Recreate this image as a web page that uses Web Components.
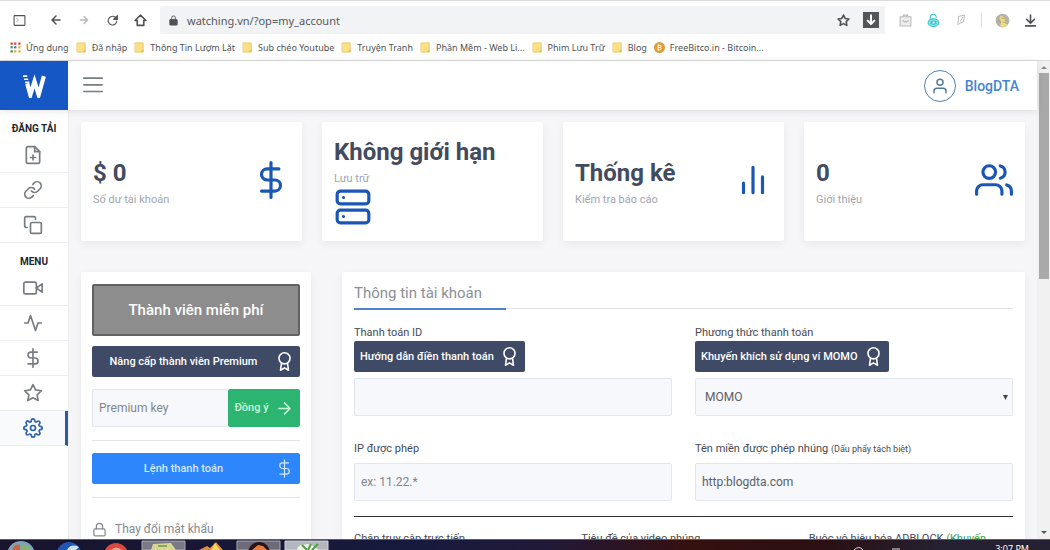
<!DOCTYPE html>
<html lang="vi">
<head>
<meta charset="utf-8">
<title>watching.vn</title>
<style>
html,body{margin:0;height:100%}
body{font-family:Roboto,"Liberation Sans",sans-serif;color:#3d4657;background:#fff}
</style>
</head>
<body>
<desktop-view></desktop-view>
<script>
const define = (name, html, setup) => {
  const tpl = document.createElement('template');
  tpl.innerHTML = '<style>*{box-sizing:border-box}:host{display:block}[hidden]{display:none}</style>' + html;
  customElements.define(name, class extends HTMLElement {
    connectedCallback() {
      if (this.shadowRoot) return;
      this.attachShadow({mode: 'open'}).append(tpl.content.cloneNode(true));
      if (setup) setup(this, this.shadowRoot);
    }
  });
};

const ICONS = {
  file: '<path d="M14 2H6a2 2 0 0 0-2 2v16a2 2 0 0 0 2 2h12a2 2 0 0 0 2-2V8z"/><path d="M14 2v6h6M12 18v-6M9 15h6"/>',
  link: '<path d="M10 13a5 5 0 0 0 7.54.54l3-3a5 5 0 0 0-7.07-7.07l-1.72 1.71"/><path d="M14 11a5 5 0 0 0-7.54-.54l-3 3a5 5 0 0 0 7.07 7.07l1.71-1.71"/>',
  copy: '<rect x="9" y="9" width="13" height="13" rx="2"/><path d="M5 15H4a2 2 0 0 1-2-2V4a2 2 0 0 1 2-2h9a2 2 0 0 1 2 2v1"/>',
  video: '<path d="M23 7l-7 5 7 5V7z"/><rect x="1" y="5" width="15" height="14" rx="2"/>',
  activity: '<path d="M22 12h-4l-3 9L9 3l-3 9H2"/>',
  dollar: '<path d="M12 1v22M17 5H9.500a3.500 3.500 0 0 0 0 7h5a3.500 3.500 0 0 1 0 7H6"/>',
  star: '<path d="M12 2l3.090 6.260L22 9.270l-5 4.870 1.180 6.880L12 17.770l-6.180 3.250L7 14.140 2 9.270l6.910-1.010z"/>',
  gear: '<circle cx="12" cy="12" r="3"/><path d="M19.4 15a1.650 1.650 0 0 0 .33 1.820l.06.06a2 2 0 1 1-2.830 2.830l-.06-.06a1.650 1.650 0 0 0-2.800 1.170V21a2 2 0 0 1-4 0v-.09A1.650 1.650 0 0 0 9 19.400a1.650 1.650 0 0 0-1.820.33l-.06.06a2 2 0 1 1-2.830-2.830l.06-.06A1.650 1.650 0 0 0 3.090 14H3a2 2 0 0 1 0-4h.09A1.650 1.650 0 0 0 4.600 9a1.650 1.650 0 0 0-.33-1.820l-.06-.06a2 2 0 1 1 2.830-2.830l.06.06A1.650 1.650 0 0 0 10 3.090V3a2 2 0 0 1 4 0v.09a1.650 1.650 0 0 0 2.820 1.180l.06-.06a2 2 0 1 1 2.830 2.830l-.06.06A1.650 1.650 0 0 0 20.910 10H21a2 2 0 0 1 0 4h-.09a1.650 1.650 0 0 0-1.510 1z"/>',
  server: '<rect x="2" y="2" width="20" height="8" rx="2"/><rect x="2" y="14" width="20" height="8" rx="2"/><path d="M6 6h.01M6 18h.01"/>',
  bars: '<path d="M12 20V4M18 20V10M6 20v-6"/>',
  users: '<path d="M17 21v-2a4 4 0 0 0-4-4H5a4 4 0 0 0-4 4v2"/><circle cx="9" cy="7" r="4"/><path d="M23 21v-2a4 4 0 0 0-3-3.870M16 3.130a4 4 0 0 1 0 7.750"/>',
  user: '<path d="M20 21v-2a4 4 0 0 0-4-4H8a4 4 0 0 0-4 4v2"/><circle cx="12" cy="7" r="4"/>',
  award: '<circle cx="12" cy="8" r="7"/><path d="M8.210 13.890L7 23l5-3 5 3-1.210-9.120"/>',
  right: '<path d="M5 12h14M12 5l7 7-7 7"/>',
  left: '<path d="M20 12H4M12 4l-8 8 8 8"/>',
  lock: '<rect x="3" y="11" width="18" height="11" rx="2"/><path d="M7 11V7a5 5 0 0 1 10 0v4"/>',
  menu: '<path d="M1 5h22M1 13h22M1 21h22"/>',
  reload: '<path d="M20 13a8 8 0 1 1-3-7l3 3"/><path d="M21 3v7h-7z" fill="currentColor"/>',
  home: '<path d="M2 12L12 2l10 10h-4v9H6v-9z"/>',
  panel: '<rect x="2" y="3" width="20" height="18" rx="1"/><path d="M7 8l3 3-3 3" stroke-width="1"/>',
  padlock: '<rect x="4" y="10" width="16" height="12" rx="1" fill="currentColor"/><path d="M8 10V6a4 4 0 0 1 8 0v4"/>',
  download: '<path d="M12 2v14M5 10l7 7 7-7M3 22h18"/>',
  save: '<rect x="1" y="1" width="22" height="22" rx="1" fill="#55565a" stroke="#55565a"/><path d="M12 5v13M7 13l5 5 5-5" stroke="#fff"/>',
  bag: '<path d="M8 6V2h8v4"/><rect x="2" y="5" width="20" height="17" fill="#eee"/><path d="M7 12l3 3 2-2 2 2 3-3"/>',
  mint: '<g stroke="#35c3cd"><path d="M6 10V6a5 5 0 0 1 11 0" /><ellipse cx="12" cy="16" rx="10" ry="7" fill="#8ee2e5"/><path d="M7 14h10M6 18h11"/><circle cx="12" cy="16" r="3" fill="#fff"/></g>',
  feather: '<path d="M6 21l1-16 12-3-2 13-9 5M11 14l4-7"/>',
  avatar: '<circle cx="12" cy="12" r="11" fill="#b5b3a6" stroke="none"/><path d="M9 4l4 2 3 4-1 4 5 2-1 4-7 3-4-3 2-7-3-4z" fill="#eadb83" stroke="none"/><path d="M10 8l4 1M14 15l6 2M5 12l4 3" stroke="#a08a54" stroke-width="1"/>',
  folder: '<path d="M3 2h17v20H3z" fill="#fbe08a" stroke="#eac762"/><path d="M18 17h3v5h-6z" fill="#e9bd54" stroke="none"/>',
  coin: '<circle cx="12" cy="12" r="12" fill="#e39a35" stroke="none"/><path d="M9 6v12M9 7h4a2 2 0 0 1 0 5H9h5a3 3 0 0 1 0 5H9" stroke="#fff"/>',
  apps: '<g stroke="none"><path fill="#d8493b" d="M1 1h5v5H1zM9 1h5v5H9zM18 1h5v5h-5z"/><path fill="#4a9b58" d="M1 9h5v5H1z"/><path fill="#4481cf" d="M9 9h5v5H9z"/><path fill="#dfae38" d="M18 9h5v5h-5zM9 18h5v5H9z"/><path fill="#3e8f55" d="M1 18h5v5H1z"/><path fill="#dfae38" d="M18 18h5v5h-5z"/></g>',
  brand: '<g stroke="#fff" stroke-linecap="butt" stroke-linejoin="miter" stroke-width="4"><path d="M5 10l3 11 4-13 4 13L21 3"/><path d="M1 3h4M2 6h4M3 9h4" stroke-width="1.500"/></g>'
};

define('ui-icon', '<style>:host{display:inline-block;flex:none;line-height:0}</style><svg viewBox="0 0 24 24" fill="none" stroke="currentColor" stroke-linecap="round" stroke-linejoin="round" aria-hidden="true"></svg>', (el, root) => {
  const svg = root.querySelector('svg'), size = el.getAttribute('size') || 20;
  svg.setAttribute('width', size);
  svg.setAttribute('height', size);
  svg.setAttribute('stroke-width', el.getAttribute('weight') || 2);
  svg.innerHTML = ICONS[el.getAttribute('name')];
});

define('browser-toolbar', `<style>
:host{border-top:1px solid #dcdcdc;background:#fff;color:#505256}
nav{display:flex;align-items:center;height:38px;padding:4px 12px}
button{display:grid;place-items:center;border:0;background:none;padding:0;color:inherit;flex:none;width:28px;height:28px}
.first{width:14px;margin-right:16px}
.ext{margin-left:6px}
.last{margin-right:-6px}
.address{display:flex;align-items:center;flex:1;height:28px;background:#f1f3f4;border-radius:2px;margin-left:6px;padding-left:8px;min-width:0}
input{flex:1;min-width:0;border:0;background:none;outline:0;padding:0 0 0 8px;font:11px "Noto Sans",sans-serif;color:#55585c}
.faded{color:#b9babc}
hr{width:1px;height:14px;border:0;background:#ddd;margin:0 6px}
</style>
<nav aria-label="Trình duyệt">
<button class="first" aria-label="Bảng"><ui-icon name="panel" size="13"></ui-icon></button>
<button aria-label="Quay lại"><ui-icon name="left" size="12" weight="3"></ui-icon></button>
<button class="faded" aria-label="Tiến"><ui-icon name="right" size="12" weight="3"></ui-icon></button>
<button aria-label="Tải lại"><ui-icon name="reload" size="13" weight="2"></ui-icon></button>
<button aria-label="Trang chủ"><ui-icon name="home" size="13" weight="3"></ui-icon></button>
<div class="address"><ui-icon name="padlock" size="11"></ui-icon><input aria-label="Địa chỉ" value="watching.vn/?op=my_account">
<button aria-label="Dấu trang"><ui-icon name="star" size="13" weight="3"></ui-icon></button>
<button aria-label="Lưu"><ui-icon name="save" size="16" weight="3"></ui-icon></button></div>
<button class="faded ext" aria-label="Tiện ích"><ui-icon name="bag" size="13"></ui-icon></button>
<button aria-label="Bảo mật"><ui-icon name="mint" size="13"></ui-icon></button>
<button class="faded" aria-label="Ghi chú"><ui-icon name="feather" size="12"></ui-icon></button>
<hr>
<button aria-label="Hồ sơ"><ui-icon name="avatar" size="15"></ui-icon></button>
<button class="last" aria-label="Tải xuống"><ui-icon name="download" size="13" weight="3"></ui-icon></button>
</nav>`);

define('bookmark-link', `<style>:host{flex:none}a{display:flex;align-items:center;gap:5px;color:#505256;text-decoration:none;white-space:nowrap;font:9px/14px "Noto Sans",sans-serif}</style><a href="#"><ui-icon size="11"></ui-icon><slot></slot></a>`, (el, root) => {
  const old = root.querySelector('ui-icon'), icon = document.createElement('ui-icon');
  icon.setAttribute('name', el.getAttribute('icon') || 'folder');
  icon.setAttribute('size', 11);
  old.replaceWith(icon);
});

define('bookmark-bar', `<style>:host{border-bottom:1px solid #dcdcdc;background:#fff}nav{display:flex;align-items:center;gap:7px;height:21px;padding:0 10px 4px;overflow:hidden}</style>
<nav aria-label="Dấu trang"><bookmark-link icon="apps">Ứng dụng</bookmark-link><bookmark-link>Đã nhập</bookmark-link><bookmark-link>Thông Tin Lượm Lặt</bookmark-link><bookmark-link>Sub chéo Youtube</bookmark-link><bookmark-link>Truyện Tranh</bookmark-link><bookmark-link>Phần Mềm - Web Li...</bookmark-link><bookmark-link>Phim Lưu Trữ</bookmark-link><bookmark-link>Blog</bookmark-link><bookmark-link icon="coin">FreeBitco.in - Bitcoin...</bookmark-link></nav>`);

define('app-header', `<style>
:host{position:relative;z-index:1;flex:none;box-shadow:0 1px 8px #0000001c;background:#fff}
header{display:flex;align-items:center;height:49px;padding-right:18px}
.brand{display:grid;place-items:center;width:68px;height:49px;background:#1457c5}
button{border:0;background:none;padding:0;margin-left:15px;color:#777b82}
.user{display:flex;align-items:center;gap:9px;margin-left:auto;color:#4385d4;font-size:14px;font-weight:500;text-decoration:none}
.ring{display:grid;place-items:center;width:32px;height:32px;border:1px solid #5182ad;border-radius:50%;color:#54779c}
</style>
<header><a class="brand" href="#" aria-label="Watching"><ui-icon name="brand" size="25"></ui-icon></a>
<button aria-label="Mở menu"><ui-icon name="menu" size="20"></ui-icon></button>
<a class="user" href="#"><span class="ring"><ui-icon name="user" size="18"></ui-icon></span>BlogDTA</a></header>`);

define('side-item', `<style>
a{display:grid;place-items:center;height:35px;padding-right:3px;border-bottom:1px solid #eeeff1;color:#777b84}
:host([active]) a{color:#2c62a8;background:#f9fafc;border-right:3px solid #2d5c98;padding-right:0}
</style><a href="#"></a>`, (el, root) => {
  const a = root.querySelector('a'), icon = document.createElement('ui-icon');
  a.setAttribute('aria-label', el.getAttribute('label'));
  icon.setAttribute('name', el.getAttribute('icon'));
  icon.setAttribute('size', 20);
  a.append(icon);
});

define('side-bar', `<style>
:host{flex:none;width:69px;background:#fff;border-right:1px solid #ececee}
h2{margin:0;height:28px;padding-top:11px;font-size:10px;line-height:16px;font-weight:700;text-align:center;color:#23272e}
</style>
<nav aria-label="Chính"><h2>ĐĂNG TẢI</h2>
<side-item icon="file" label="Tải tệp"></side-item><side-item icon="link" label="Liên kết"></side-item><side-item icon="copy" label="Sao chép"></side-item>
<h2>MENU</h2>
<side-item icon="video" label="Video"></side-item><side-item icon="activity" label="Hoạt động"></side-item><side-item icon="dollar" label="Doanh thu"></side-item><side-item icon="star" label="Nâng cấp"></side-item><side-item icon="gear" label="Cài đặt" active></side-item></nav>`);

define('stat-card', `<style>
:host{min-width:0}
article{display:flex;flex-wrap:wrap;align-items:center;align-content:center;justify-content:space-between;height:119px;padding:0 12px;background:#fff;border-radius:2px;box-shadow:0 3px 10px #0000000f;color:#1a57b5}
h3{margin:0;font-size:24px;line-height:36px;font-weight:700;color:#424b5f;white-space:nowrap}
p{margin:0;font-size:11px;line-height:18px;color:#a2a6ae}
::slotted(ui-icon){margin-bottom:4px}
</style><article><div><h3><slot></slot></h3><p><slot name="note"></slot></p></div><slot name="icon"></slot></article>`);

define('action-button', `<style>
:host([inline]){display:inline-block}
button{display:flex;align-items:center;justify-content:center;gap:6px;width:100%;height:31px;padding:0 6px;border:0;border-radius:2px;background:#3f4a66;color:#fff;font:500 11px/16px Roboto,sans-serif;white-space:nowrap}
span{flex:1;text-align:center}
:host([tone=blue]) button{background:#2e86fd;color:#d5e8ff}
:host([tone=green]) button{height:38px;background:#2cb570;color:#c9f7dc}
</style><button type="button"><span><slot></slot></span><slot name="icon"></slot></button>`);

define('plan-panel', `<style>
section{display:flex;flex-direction:column;padding:12px 11px 24px;min-height:400px;background:#fff;border-radius:2px;box-shadow:0 3px 10px #0000000f}
.plan{display:grid;place-items:center;height:52px;margin-bottom:10px;border:2px solid #626262;border-radius:2px;background:#8d8d8d;color:#fff;font-size:15px;font-weight:500}
form{display:flex;margin-top:12px}
input{flex:1;min-width:0;height:38px;padding:0 6px;border:1px solid #e0e5ee;border-right:0;border-radius:2px 0 0 2px;background:#f6f8fc;font:12px Roboto,sans-serif;color:#555;outline:0}
input::placeholder{color:#82868c;opacity:1}
form action-button{width:72px;flex:none}
hr{width:100%;height:1px;border:0;background:#e2e4e7;margin:13px 0 12px}
.pw{display:flex;align-items:center;gap:8px;margin-top:10px;color:#858a92;font-size:12px;line-height:18px;text-decoration:none}
</style>
<section aria-label="Gói thành viên"><div class="plan">Thành viên miễn phí</div>
<action-button>Nâng cấp thành viên Premium<ui-icon slot="icon" name="award" size="19"></ui-icon></action-button>
<form><input placeholder="Premium key" aria-label="Premium key"><action-button tone="green">Đồng ý<ui-icon slot="icon" name="right" size="19"></ui-icon></action-button></form>
<hr><action-button tone="blue">Lệnh thanh toán<ui-icon slot="icon" name="dollar" size="19" weight="1.500"></ui-icon></action-button><hr>
<a class="pw" href="#"><ui-icon name="lock" size="15"></ui-icon>Thay đổi mật khẩu</a></section>`);

define('account-panel', `<style>
section{padding:12px;min-height:400px;background:#fff;border-radius:2px;box-shadow:0 3px 10px #0000000f}
.title{display:flex;border-bottom:1px solid #e0e2e5;margin-bottom:16px;height:25px}
h2{margin:0;height:26px;padding-right:24px;border-bottom:2px solid #4b86cf;font-size:15px;line-height:18px;font-weight:400;color:#8a9099}
.pair{display:grid;grid-template-columns:1fr 1fr;gap:24px 23px}
.three{display:grid;grid-template-columns:1fr 1fr 1fr;gap:23px}
label{display:block;font-size:11px;line-height:16px;color:#454b54}
small{font-size:9px}
em{font-style:normal;color:#3f9f51}
input,select{display:block;width:100%;height:38px;padding:0 6px;border:1px solid #e2e6ee;border-radius:2px;background:#f6f8fc;color:#5c6067;font:12px Roboto,sans-serif;outline:0;appearance:none}
select{padding:0 9px;background:#f6f8fc url("data:image/svg+xml,%3Csvg xmlns='http://www.w3.org/2000/svg' width='5' height='5'%3E%3Cpath d='M0 0h5L2.5 5z' fill='%23444'/%3E%3C/svg%3E") no-repeat right 4px center}
input::placeholder{color:#82868c;opacity:1}
.top{margin-bottom:6px}
.low label{margin:1px 0 6px}
.rule{height:1px;border:0;background:#2e3138;margin:15px 0 14px}
</style>
<section><div class="title"><h2>Thông tin tài khoản</h2></div>
<form><div class="pair">
<div><label for="pid">Thanh toán ID</label><action-button class="top" inline>Hướng dẫn điền thanh toán<ui-icon slot="icon" name="award" size="19"></ui-icon></action-button><input id="pid"></div>
<div><label for="method">Phương thức thanh toán</label><action-button class="top" inline>Khuyến khích sử dụng ví MOMO<ui-icon slot="icon" name="award" size="19"></ui-icon></action-button><select id="method"><option>MOMO</option></select></div>
<div class="low"><label for="ip">IP được phép</label><input id="ip" placeholder="ex: 11.22.*"></div>
<div class="low"><label for="domain">Tên miền được phép nhúng <small>(Dấu phẩy tách biệt)</small></label><input id="domain" value="http:blogdta.com"></div>
</div><hr class="rule"><div class="three">
<div><label for="direct">Chặn truy cập trực tiếp</label><select id="direct"><option></option></select></div>
<div><label for="vtitle">Tiêu đề của video nhúng</label><input id="vtitle"></div>
<div><label for="block">Buộc vô hiệu hóa ADBLOCK <em>(Khuyến khích)</em></label><select id="block"><option></option></select></div>
</div></form></section>`);

define('scroll-track', `<style>
:host{flex:none;width:13px;background:#f1f1f1;display:flex;flex-direction:column;align-items:center;padding:5px 1px;gap:4px}
i{border:3px solid transparent}
.up{border-top:0;border-bottom-color:#8b8b8b}.down{border-bottom:0;border-top-color:#555;margin-top:auto}
.thumb{width:10px;height:44%;background:#a9a9a9}
</style><i class="up"></i><div class="thumb"></div><i class="down"></i>`);

define('task-bar', `<style>
:host{flex:none;height:11px;overflow:hidden;background:linear-gradient(90deg,#19142d,#171a3d 40%,#221938 52%,#35100f 66%,#2b0f12 78%,#252132 90%);border-top:1px solid #575a68}
.row{display:flex;height:10px;padding-right:21px;color:#fff}
svg{flex:none}
time{margin-left:auto;padding-top:2px;font:9px/14px "Noto Sans",sans-serif}
</style><div class="row"><svg width="900" height="10" viewBox="0 0 900 10" aria-hidden="true">
<circle cx="21" cy="15" r="14" fill="#7ea5b5"/><path d="M12 10q3-7 8-5v5z" fill="#d1643e"/><path d="M21 10V5q7-1 9 5z" fill="#8eb06d"/>
<circle cx="69" cy="14" r="12" fill="#1f58b4"/><path d="M67 10q4-7 12-3l-3 3z" fill="#cce2f3"/>
<circle cx="116" cy="15" r="12" fill="#d84a3e"/><path d="M111 10q5-5 11 0z" fill="#eca69c"/>
<path d="M142 1h43v9h-43z" fill="#797a86" stroke="#a8aab2"/><path d="M151 10l2-6 18-1 5 7z" fill="#d9d594"/><path d="M158 5h9v2h-9z" fill="#80a966"/>
<path d="M199 10l8-4 3 2 6-6 7 8z" fill="#e48d35"/><path d="M211 10l4-7 5 7z" fill="#f5d65e"/>
<path d="M237 1h43v9h-43z" fill="#6d6b78" stroke="#a8aab2"/><circle cx="259" cy="13" r="11" fill="#281414"/><path d="M252 10l6-5 5 1 4 4z" fill="#e67e43"/>
<path d="M285 1h43v9h-43z" fill="#b5b7bf" stroke="#d2d4da"/><path d="M297 10q0-6 13-6l9 6z" fill="#eef3dd"/><path d="M302 5l5 5M311 4l-3 6M318 4l-6 6" stroke="#559d4b" stroke-width="2"/>
<path d="M854 10q5-5 9 0M892 9h11" fill="none" stroke="#ddd"/></svg><time>3:07 PM</time></div>`);

define('desktop-view', `<style>
:host{display:flex;flex-direction:column;height:100vh;overflow:hidden}
browser-toolbar,bookmark-bar{flex:none}
.view{display:flex;flex:1;min-height:0}
.app{display:flex;flex-direction:column;flex:1;min-width:0}
.body{display:flex;flex:1;min-height:0}
main{flex:1;min-width:0;padding:12px;overflow:hidden;background:#f6f6f8}
.stats{display:grid;grid-template-columns:repeat(4,1fr);gap:20px;margin-bottom:31px}
.panels{display:grid;grid-template-columns:230px 1fr;gap:31px}
</style>
<browser-toolbar></browser-toolbar><bookmark-bar></bookmark-bar>
<div class="view"><div class="app"><app-header></app-header><div class="body"><side-bar></side-bar><main>
<div class="stats">
<stat-card>$ 0<span slot="note">Số dư tài khoản</span><ui-icon slot="icon" name="dollar" size="38"></ui-icon></stat-card>
<stat-card>Không giới hạn<span slot="note">Lưu trữ</span><ui-icon slot="icon" name="server" size="38"></ui-icon></stat-card>
<stat-card>Thống kê<span slot="note">Kiểm tra báo cáo</span><ui-icon slot="icon" name="bars" size="38"></ui-icon></stat-card>
<stat-card>0<span slot="note">Giới thiệu</span><ui-icon slot="icon" name="users" size="38"></ui-icon></stat-card>
</div><div class="panels"><plan-panel></plan-panel><account-panel></account-panel></div>
</main></div></div><scroll-track></scroll-track></div><task-bar></task-bar>`);
</script>
</body>
</html>
